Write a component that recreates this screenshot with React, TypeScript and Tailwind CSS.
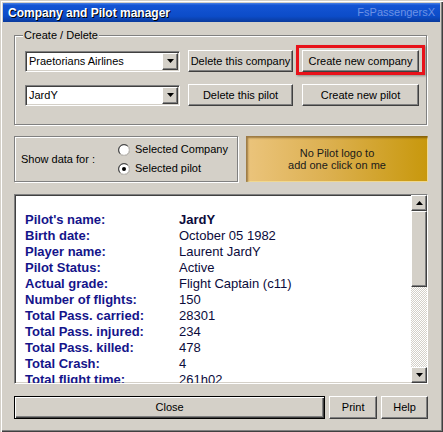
import React from "react";

const raised =
  "border border-t-white border-l-white border-r-[#404040] border-b-[#404040] shadow-[inset_-1px_-1px_#808080]";
const sunken =
  "border border-t-[#808080] border-l-[#808080] border-r-white border-b-white shadow-[inset_1px_1px_#404040,inset_-1px_-1px_#d4d0c8]";
const etched =
  "border border-[#808080] shadow-[inset_1px_1px_#ffffff,1px_1px_#ffffff]";

function Arrow({ down = true }: { down?: boolean }) {
  return (
    <svg width="7" height="4" viewBox="0 0 7 4" className="block">
      {down ? <polygon points="0,0 7,0 3.5,4" fill="#000" /> : <polygon points="0,4 7,4 3.5,0" fill="#000" />}
    </svg>
  );
}

function Combo({ value }: { value: string }) {
  return (
    <div className={`w-[155px] h-[21px] bg-white flex items-center ${sunken}`}>
      <span className="flex-1 pl-[3px] truncate">{value}</span>
      <div className={`w-[16px] h-[17px] mr-[1px] bg-[#d4d0c8] flex items-center justify-center ${raised}`}>
        <Arrow />
      </div>
    </div>
  );
}

function Button({ label, className = "" }: { label: string; className?: string }) {
  return (
    <div className={`h-[22px] bg-[#d4d0c8] flex items-center justify-center ${raised} ${className}`}>
      {label}
    </div>
  );
}

function Radio({ checked }: { checked: boolean }) {
  return (
    <svg width="12" height="12" viewBox="0 0 12 12" className="block">
      <circle cx="6" cy="6" r="5.5" fill="#ffffff" stroke="#808080" strokeWidth="1" />
      <path d="M2.2 9.8 A5 5 0 0 1 9.8 2.2" fill="none" stroke="#404040" strokeWidth="1" />
      <path d="M9.8 2.2 A5 5 0 0 1 2.2 9.8" fill="none" stroke="#d4d0c8" strokeWidth="1" />
      {checked ? <circle cx="6" cy="6" r="2" fill="#000" /> : null}
    </svg>
  );
}

const rows: [string, string, boolean?][] = [
  ["Pilot's name:", "JardY", true],
  ["Birth date:", "October 05 1982"],
  ["Player name:", "Laurent JardY"],
  ["Pilot Status:", "Active"],
  ["Actual grade:", "Flight Captain (c11)"],
  ["Number of flights:", "150"],
  ["Total Pass. carried:", "28301"],
  ["Total Pass. injured:", "234"],
  ["Total Pass. killed:", "478"],
  ["Total Crash:", "4"],
  ["Total flight time:", "261h02"],
];

export default function App() {
  return (
    <div className="w-[443px] h-[432px] bg-[#d4d0c8] p-[3px] flex flex-col font-['Liberation_Sans',Arial,sans-serif] text-[11px] text-black shadow-[inset_1px_1px_#d4d0c8,inset_2px_2px_#ffffff,inset_-1px_-1px_#404040,inset_-2px_-2px_#808080] overflow-hidden">
      <div className="h-[19px] shrink-0 flex items-center justify-between pl-[5px] pr-[5px] bg-[linear-gradient(to_bottom,#4a80e4_0%,#1454d4_12%,#0c4cc8_70%,#0a3a9c_100%)]">
        <span className="text-white font-bold text-[12px] [text-shadow:1px_1px_0_#000]">Company and Pilot manager</span>
        <span className="text-[#6d92e4] text-[11px]">FsPassengersX</span>
      </div>

      <div className="flex flex-col pl-[11px] pr-[12px]">
        {/* Create / Delete group */}
        <div className={`relative mt-[13px] mr-[1px] h-[90px] ${etched}`}>
          <span className="absolute -top-[7px] left-[8px] px-[1px] bg-[#d4d0c8] leading-[13px]">Create / Delete</span>
          <div className="flex flex-col gap-[12px] pt-[14px] pl-[10px]">
            <div className="flex items-center h-[22px]">
              <Combo value="Praetorians Airlines" />
              <Button label="Delete this company" className="w-[105px] ml-[8px]" />
              <div className="relative ml-[9px]">
                <Button label="Create new company" className="w-[117px]" />
                <div className="absolute -left-[6px] -right-[6px] -top-[5px] -bottom-[3px] border-[3px] border-[#e8121a] shadow-[1px_1px_2px_rgba(0,0,0,0.35)]" />
              </div>
            </div>
            <div className="flex items-center h-[22px]">
              <Combo value="JardY" />
              <Button label="Delete this pilot" className="w-[105px] ml-[8px]" />
              <Button label="Create new pilot" className="w-[117px] ml-[9px]" />
            </div>
          </div>
        </div>

        {/* Show data + logo */}
        <div className="flex mt-[11px] h-[46px] gap-[8px]">
          <div className={`w-[224px] flex items-center pl-[6px] ${etched}`}>
            <span className="w-[97px]">Show data for :</span>
            <div className="flex flex-col gap-[3px]">
              <div className="flex items-center h-[16px] gap-[5px]">
                <Radio checked={false} />
                <span>Selected Company</span>
              </div>
              <div className="flex items-center h-[16px] gap-[5px]">
                <Radio checked={true} />
                <span>Selected pilot</span>
              </div>
            </div>
          </div>
          <div className="flex-1 flex flex-col items-center justify-center leading-[12px] text-[#1a1a1a] bg-[linear-gradient(to_right,#ebc47c_0%,#dcb050_45%,#c8980c_100%)] shadow-[inset_2px_2px_2px_rgba(60,30,0,0.45),inset_-1px_-1px_#f0d890]">
            <span>No Pilot logo to</span>
            <span>add one click on me</span>
          </div>
        </div>

        {/* Data box */}
        <div className={`mt-[12px] h-[190px] bg-white flex ${sunken}`}>
          <div className="flex-1 overflow-hidden pt-[17px] pl-[10px]">
            {rows.map(([label, value, bold]) => (
              <div key={label} className="flex h-[16px] leading-[16px] text-[13px]">
                <span className="w-[154px] shrink-0 font-bold text-[#14148a]">{label}</span>
                <span className={`text-[#0b0b3b] ${bold ? "font-bold" : ""}`}>{value}</span>
              </div>
            ))}
          </div>
          <div className="w-[16px] flex flex-col">
            <div className={`h-[16px] bg-[#d4d0c8] flex items-center justify-center ${raised}`}>
              <Arrow down={false} />
            </div>
            <div className={`h-[76px] bg-[#d4d0c8] ${raised}`} />
            <div className="flex-1 bg-[repeating-conic-gradient(#d4d0c8_0%_25%,#ffffff_0%_50%)] bg-[length:2px_2px]" />
            <div className={`h-[16px] bg-[#d4d0c8] flex items-center justify-center ${raised}`}>
              <Arrow />
            </div>
          </div>
        </div>

        {/* Bottom buttons */}
        <div className="flex mt-[12px] gap-[4px]">
          <div className="w-[312px] h-[23px] border border-black bg-[#d4d0c8] flex items-center justify-center shadow-[inset_1px_1px_#ffffff,inset_-1px_-1px_#404040,inset_-2px_-2px_#808080]">
            Close
          </div>
          <Button label="Print" className="w-[48px] h-[23px]" />
          <Button label="Help" className="w-[47px] h-[23px]" />
        </div>
      </div>
    </div>
  );
}
